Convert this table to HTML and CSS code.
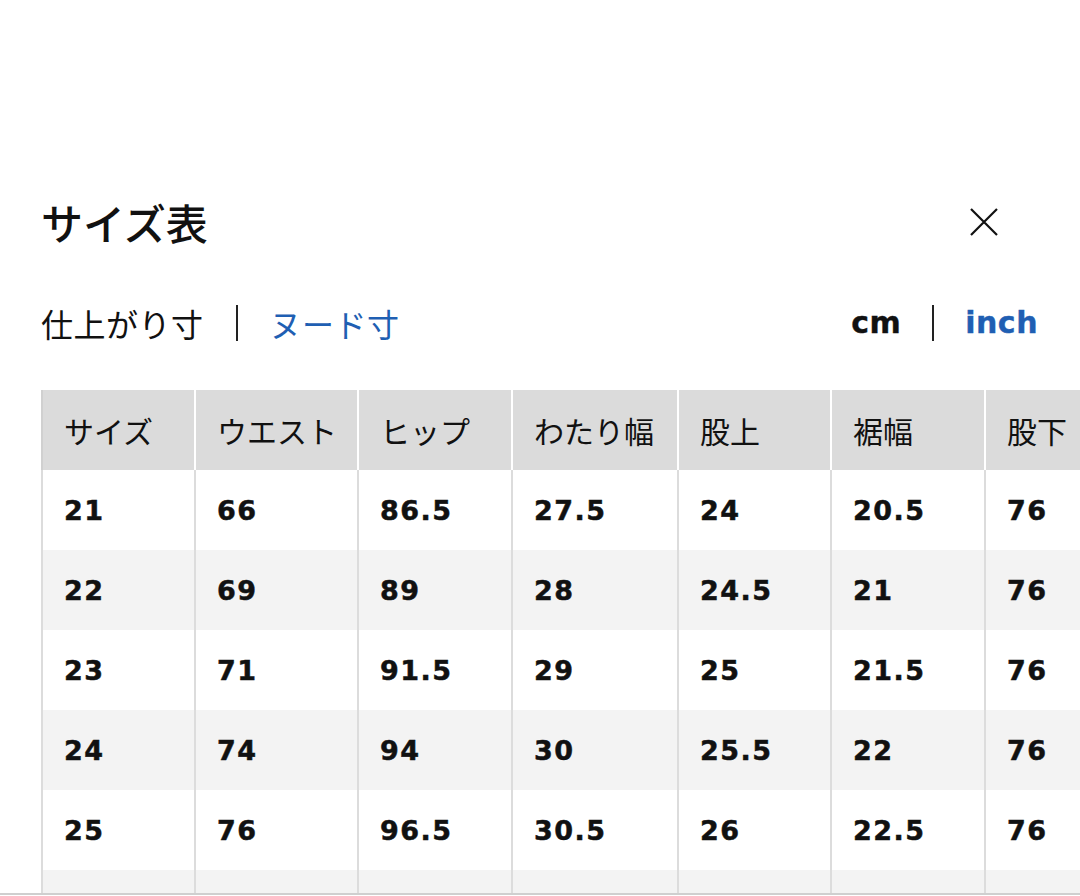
FILE: index.html
```html
<!DOCTYPE html>
<html lang="ja">
<head>
<meta charset="utf-8">
<link rel="stylesheet" href="styles.css">
</head>
<body>
<div class="page">
  <div class="header">
    <h1 class="title">サイズ表</h1>
    <button class="close" aria-label="閉じる">
      <svg width="32" height="32" viewBox="0 0 32 32"><path d="M3 3 L29 29 M29 3 L3 29" stroke="#111" stroke-width="2.2" fill="none"/></svg>
    </button>
  </div>
  <div class="tabs">
    <div class="tabgroup">
      <span class="tab active">仕上がり寸</span>
      <span class="sep"></span>
      <span class="tab link">ヌード寸</span>
    </div>
    <div class="tabgroup units">
      <span class="unit active">cm</span>
      <span class="sep"></span>
      <span class="unit link">inch</span>
    </div>
  </div>
</div>
<div class="tablewrap">
  <table class="sizes">
    <colgroup>
      <col class="c1"><col class="c2"><col class="c3"><col class="c4"><col class="c5"><col class="c6"><col class="c7">
    </colgroup>
    <thead>
      <tr><th>サイズ</th><th>ウエスト</th><th>ヒップ</th><th>わたり幅</th><th>股上</th><th>裾幅</th><th>股下</th></tr>
    </thead>
    <tbody>
      <tr><td>21</td><td>66</td><td>86.5</td><td>27.5</td><td>24</td><td>20.5</td><td>76</td></tr>
      <tr><td>22</td><td>69</td><td>89</td><td>28</td><td>24.5</td><td>21</td><td>76</td></tr>
      <tr><td>23</td><td>71</td><td>91.5</td><td>29</td><td>25</td><td>21.5</td><td>76</td></tr>
      <tr><td>24</td><td>74</td><td>94</td><td>30</td><td>25.5</td><td>22</td><td>76</td></tr>
      <tr><td>25</td><td>76</td><td>96.5</td><td>30.5</td><td>26</td><td>22.5</td><td>76</td></tr>
      <tr><td></td><td></td><td></td><td></td><td></td><td></td><td></td></tr>
    </tbody>
  </table>
</div>
</body>
</html>
```
FILE: styles.css
```css
html, body {
  margin: 0;
  padding: 0;
  background: #fff;
  overflow: hidden;
}
body {
  width: 1080px;
  height: 896px;
  font-family: "Noto Sans CJK JP", "Noto Sans", sans-serif;
  color: #111;
}
.page {
  padding: 192px 42px 0 41px;
}
.header {
  display: flex;
  align-items: center;
  justify-content: space-between;
  height: 60px;
}
.title {
  margin: 0;
  font-size: 42px;
  font-weight: 500;
  line-height: 60px;
  color: #111;
}
.close {
  border: 0;
  background: none;
  padding: 0;
  width: 32px;
  height: 32px;
  margin-right: 38px;
  display: flex;
}
.tabs {
  display: flex;
  justify-content: space-between;
  align-items: center;
  height: 40px;
  margin-top: 51px;
}
.tabgroup {
  display: flex;
  align-items: center;
  gap: 32px;
}
.tab {
  font-size: 32px;
  line-height: 40px;
  letter-spacing: 0.5px;
}
.sep {
  width: 2px;
  height: 36px;
  background: #222;
}
.link {
  color: #1f5fb3;
}
.units {
  gap: 31px;
}
.unit {
  font-family: "DejaVu Sans", sans-serif;
  font-weight: 700;
  font-size: 30px;
  line-height: 40px;
  letter-spacing: 0.5px;
  -webkit-text-stroke: 0.4px currentColor;
}
.tablewrap {
  margin-top: 47px;
  padding-left: 41px;
  height: 503px;
  overflow: hidden;
  border-bottom: 2px solid #cfcfcf;
}
.sizes {
  border-collapse: collapse;
  table-layout: fixed;
  width: 1100px;
}
.c1 { width: 153px; }
.c2 { width: 163px; }
.c3 { width: 154px; }
.c4 { width: 166px; }
.c5 { width: 153px; }
.c6 { width: 154px; }
.c7 { width: 157px; }
.sizes th {
  background: #dbdbdb;
  height: 80px;
  padding: 0 0 0 21px;
  text-align: left;
  font-weight: 400;
  font-size: 30px;
  color: #111;
  border-left: 2px solid #fff;
  white-space: nowrap;
}
.sizes th:first-child {
  border-left: 2px solid #d0d0d0;
}
.sizes td {
  height: 80px;
  padding: 0 0 0 21px;
  font-family: "DejaVu Sans", sans-serif;
  font-weight: 700;
  font-size: 27px;
  letter-spacing: 1.5px;
  -webkit-text-stroke: 0.5px currentColor;
  color: #111;
  border-left: 2px solid #dcdcdc;
  white-space: nowrap;
}
.sizes tbody tr:nth-child(odd) td {
  background: #fff;
}
.sizes tbody tr:nth-child(even) td {
  background: #f3f3f3;
}
```
